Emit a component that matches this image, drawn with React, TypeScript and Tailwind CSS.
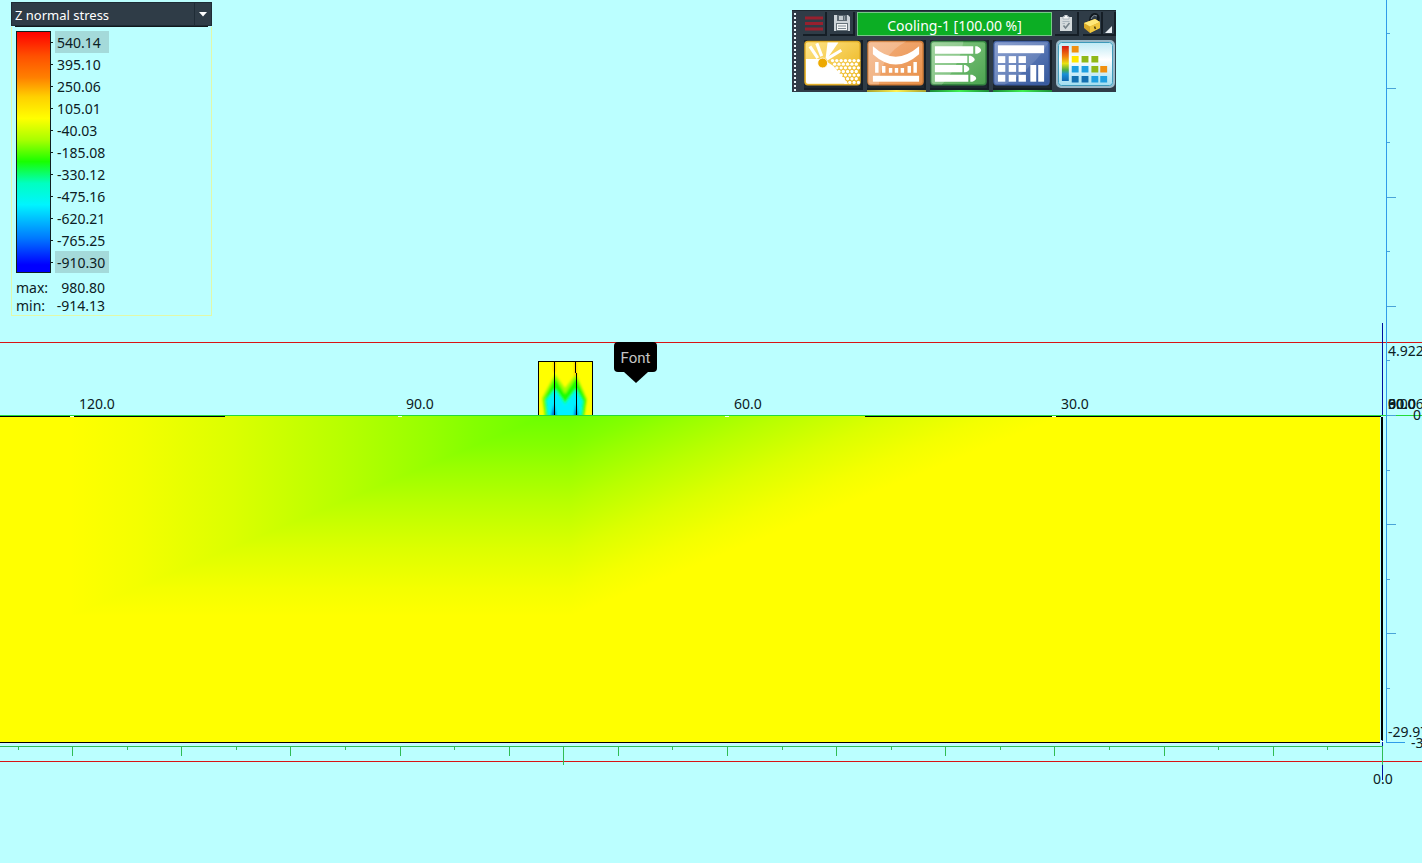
import React from "react";

const LEVELS = [
  "540.14", "395.10", "250.06", "105.01", "-40.03", "-185.08",
  "-330.12", "-475.16", "-620.21", "-765.25", "-910.30",
];

const FIELD_STOPS: [number, string][] = [
  [0, "#6cff00"],
  [0.15, "#84ff00"],
  [0.25, "#98ff00"],
  [0.43, "#b8ff00"],
  [0.66, "#dcff00"],
  [0.86, "#f4ff00"],
  [1, "#ffff00"],
];

function FieldGradient({ id, x1, y1, x2, y2 }: { id: string; x1: number; y1: number; x2: number; y2: number }) {
  return (
    <linearGradient id={id} gradientUnits="userSpaceOnUse" x1={x1} y1={y1} x2={x2} y2={y2}>
      {FIELD_STOPS.map(([offset, color]) => (
        <stop key={offset} offset={offset} stopColor={color} />
      ))}
    </linearGradient>
  );
}

const BOTTOM_TICKS = [18, 72, 127, 181, 236, 290, 345, 400, 454, 509, 563, 618, 672, 727, 782, 836, 891, 945, 1000, 1054, 1109, 1164, 1218, 1273, 1327];
const SIDE_TICKS = [33, 88, 142, 197, 251, 306, 360, 415, 470, 524, 579, 633, 688];

function StressPlot() {
  return (
    <svg
      className="absolute inset-0 h-full w-full"
      viewBox="0 0 1422 863"
      preserveAspectRatio="xMaxYMid slice"
      role="img"
      aria-label="Z normal stress cross-section"
    >
      <defs>
        <FieldGradient id="fieldLeft" x1={545} y1={0} x2={70} y2={0} />
        <FieldGradient id="fieldDown" x1={0} y1={416} x2={0} y2={616} />
        <FieldGradient id="fieldRight" x1={570} y1={416} x2={640} y2={588} />
        <filter id="soft" x="-20%" y="-20%" width="140%" height="140%">
          <feGaussianBlur stdDeviation="1.2" />
        </filter>
        <clipPath id="bead">
          <rect x="538" y="361" width="55" height="54" />
        </clipPath>
      </defs>

      {/* Plate */}
      <g shapeRendering="crispEdges">
        <rect x="0" y="416" width="1380" height="326" fill="#ffff00" />
        <polygon points="70,416 545,416 70,616" fill="url(#fieldLeft)" />
        <polygon points="545,416 570,416 570,616 70,616" fill="url(#fieldDown)" />
        <polygon points="570,416 1062,416 570,616" fill="url(#fieldRight)" />
      </g>

      {/* Weld bead */}
      <g clipPath="url(#bead)">
        <rect x="538" y="361" width="55" height="54" fill="#ffff00" />
        <g filter="url(#soft)">
          <polygon points="555,374 565,388 576,374 587,399 584,420 545,420 542,398" fill="#a0ff00" />
          <polygon points="555,378 565,394 576,378 586,400 583,420 546,420 544,399" fill="#1cff00" />
          <polygon points="555,389 565,403 576,389 583,401 581,420 548,420 546,400" fill="#00ffe0" />
          <polygon points="555,392 565,406 576,392 581,402 579,420 549,420 548,402" fill="#00f0ff" />
          <path d="M554 404L557 420H550Z M576 404L579 420H573Z" fill="#0070d8" />
          <path d="M575.500 361V376M554.500 361V372" stroke="#ff9000" strokeWidth="2" opacity="0.6" />
        </g>
      </g>
      <g fill="none" stroke="#000" shapeRendering="crispEdges">
        <path d="M538.500 416V361.500H592.500V416M554.500 362V415M575.500 362V373M576.500 373V415" />
        <path d="M0 416.500H70M74 416.500H225M865 416.500H1052M1056 416.500H1381M0 742.500H1380" />
        <path d="M1382 417V740" strokeWidth="2" />
      </g>

      {/* Axes and guides */}
      <g shapeRendering="crispEdges">
        <rect x="0" y="342" width="1422" height="1" fill="#d81414" />
        <rect x="0" y="761" width="1422" height="1" fill="#d81414" />
        <rect x="0" y="415" width="1422" height="1" fill="#22dc38" />
        <rect x="0" y="743" width="1380" height="1" fill="#d6eeff" />
        <rect x="0" y="746" width="1383" height="1" fill="#30bc54" />
        <rect x="563" y="746" width="1" height="19" fill="#30bc54" />
        <rect x="1382" y="746" width="1" height="19" fill="#30bc54" />
      </g>
      <g fill="none" shapeRendering="crispEdges">
        <path d={BOTTOM_TICKS.map((x, i) => `M${x + 0.5} 747V${i % 2 ? 756 : 750}`).join("")} stroke="#30bc54" />
        <path d="M1382.500 323V415M1382.500 740V746M1382.500 765V780" stroke="#0010a0" />
        <path d="M1386.500 0V742.500H1405" stroke="#2f9be8" />
        <path d={SIDE_TICKS.map((y, i) => `M1387 ${y + 0.5}H${i % 2 ? 1396 : 1390}`).join("")} stroke="#4aa4d8" />
        <path d="M70 416.500H74M398 416.500H402M725 416.500H729M1052 416.500H1056M1381 741.500H1384" stroke="#fffff0" />
      </g>

      <g className="font-['Noto_Sans',sans-serif] text-[14px]" fill="#0c2024">
        <text x="79" y="409">120.0</text>
        <text x="406" y="409">90.0</text>
        <text x="734" y="409">60.0</text>
        <text x="1061" y="409">30.0</text>
        <text x="1373" y="784">0.0</text>
        <text x="1388" y="356">4.922</text>
        <text x="1388" y="409">30.0</text>
        <text x="1388" y="409">60.0</text>
        <text x="1388" y="409">90.0</text>
        <text x="1388" y="409">0.006</text>
        <text x="1413" y="420">0</text>
        <text x="1388" y="737">-29.97</text>
        <text x="1411" y="748">-30</text>
      </g>
    </svg>
  );
}

function Legend() {
  return (
    <section className="w-[201px] text-[14px] text-[#0c2024]" aria-label="Stress legend">
      <div className="relative">
        <select
          aria-label="Result quantity"
          className="block h-6 w-full appearance-none rounded-none border border-[#1f2c36] bg-[#2f3c47] pt-px pl-[3px] text-[13px] leading-5 text-white"
        >
          <option>Z normal stress</option>
        </select>
        <span className="pointer-events-none absolute inset-y-0 right-0 flex w-[18px] items-center justify-center border border-[#1f2c36]">
          <svg width="8" height="5" viewBox="0 0 8 5" fill="#fff">
            <path d="M0 0H8L4 4.500Z" />
          </svg>
        </span>
      </div>
      <div className="mx-1 h-px bg-[#10181c]" />
      <div className="border border-t-0 border-[#e2f8a8] pl-1 pt-1">
        <div className="flex">
          <div className="w-[35px] border border-[#102020] bg-[linear-gradient(to_bottom,#ff0000_0%,#ff5000_10%,#ff8000_19%,#ffd000_27%,#ffff00_36%,#a8ff00_45%,#18ff00_54%,#00ffc0_63%,#00f4ff_72%,#0078ff_86%,#0000ff_97%)]" />
          <ul>
            {LEVELS.map((level, i) => (
              <li key={level} className="flex h-[22px] items-center">
                <span className="mr-0.5 h-px w-0.5 bg-[#102020]" />
                <span
                  className={
                    i === 0 || i === LEVELS.length - 1
                      ? "h-[22px] w-[54px] bg-[#a4dada] pl-0.5 leading-6"
                      : "h-[22px] w-[54px] pl-0.5 leading-6"
                  }
                >
                  {level}
                </span>
              </li>
            ))}
          </ul>
        </div>
        <dl className="grid w-[89px] grid-cols-[auto_1fr] pt-[6px] leading-[18px]">
          <dt>max:</dt>
          <dd className="text-right">980.80</dd>
          <dt>min:</dt>
          <dd className="text-right">-914.13</dd>
        </dl>
      </div>
    </section>
  );
}

function Tile({ id, from, to, border, children }: { id: string; from: string; to: string; border: string; children: React.ReactNode }) {
  return (
    <svg viewBox="0 0 58 48" className="block h-12 w-full">
      <defs>
        <linearGradient id={id} x1="0" y1="0" x2="1" y2="1">
          <stop offset="0" stopColor={from} />
          <stop offset="1" stopColor={to} />
        </linearGradient>
      </defs>
      <rect x="1" y="1" width="56" height="44" rx="3" fill={`url(#${id})`} stroke={border} strokeWidth="1.5" />
      {children}
    </svg>
  );
}

const DOTS = Array.from({ length: 7 }, (_, r) =>
  Array.from({ length: 7 }, (_, c) => ({ x: 29 + c * 4.4 + (r % 2) * 2.2, y: 20.500 + r * 3.7 })),
).flat().filter((d) => d.x < 56 && d.x > 24 + (d.y - 20) * 0.8);

function WeldIcon() {
  return (
    <Tile id="tileWeld" from="#ffe68c" to="#eab010" border="#e0ac28">
      <path d="M2 19H19L30 26L45 44H4Q2 44 2 42Z" fill="#fff" />
      <path d="M22 18L24 2H35L24 18Z" fill="#fff" />
      <g stroke="#fff" strokeWidth="3.2">
        <path d="M14 18L6 6M18 16L13 3M23 19L38 10" />
      </g>
      <g fill="#fff">
        {DOTS.map((d) => <circle key={`${d.x}-${d.y}`} cx={d.x} cy={d.y} r="1.700" />)}
      </g>
      <circle cx="19" cy="23" r="5" fill="#eda900" stroke="#fff" strokeWidth="0.8" />
    </Tile>
  );
}

function BendIcon() {
  return (
    <Tile id="tileBend" from="#f4b080" to="#e89048" border="#d07c38">
      <path d="M1 3Q1 1 3 1H40Q14 14 12 45H3Q1 45 1 43Z" fill="#fff" opacity="0.22" />
      <path d="M6 6V14Q29 35 53 14V6Q29 27 6 6Z" fill="#fff" />
      <path d="M10 22V33M17 26V33M24 28V33M30 28V33M36 28V33M43 26V33M49 22V33" stroke="#fff" strokeWidth="3.500" />
      <rect x="6" y="36" width="47" height="6" fill="#fff" />
    </Tile>
  );
}

function QueueIcon() {
  return (
    <Tile id="tileQueue" from="#8ccc88" to="#4ca450" border="#348440">
      <path d="M1 3Q1 1 3 1H34Q30 26 12 45H3Q1 45 1 43Z" fill="#fff" opacity="0.2" />
      <g fill="#fff">
        <path d="M5 6H44V13.500H5ZM5 15.500H38V23H5ZM5 25H33V32.500H5ZM5 35H39V42H5Z" />
        <path d="M46 6H48Q52 8 52 10Q52 12 48 13.500H46ZM39.500 15.500H41.500Q45.500 17.500 45.500 19.500Q45.500 21.500 41.500 23H39.500ZM34.500 25H36Q40 27 40 29Q40 31 36 32.500H34.500ZM41 35H43Q47 37 47 38.500Q47 40.500 43 42H41Z" />
      </g>
    </Tile>
  );
}

function TableIcon() {
  return (
    <Tile id="tileTable" from="#7c94cc" to="#34589c" border="#3c5ca0">
      <path d="M1 3Q1 1 3 1H57Q44 26 12 45H3Q1 45 1 43Z" fill="#fff" opacity="0.12" />
      <g fill="#fff">
        <rect x="5" y="5" width="47" height="8" />
        {[16, 25, 35].map((y) => [5, 16, 26].map((x) => <rect key={`${x}-${y}`} x={x} y={y} width="7.5" height="7" />))}
        <rect x="38" y="25" width="6" height="17" />
        <rect x="46" y="25" width="6" height="17" />
      </g>
    </Tile>
  );
}

const CELLS: [number, number, string][] = [
  [16, 5, "#f09010"],
  [16, 15, "#ffe600"], [26, 15, "#90b818"], [36, 15, "#90b818"],
  [16, 25, "#20a0e0"], [26, 25, "#20a0e0"], [36, 25, "#90b818"], [45, 25, "#f09010"],
  [16, 35, "#1470b0"], [26, 35, "#1470b0"], [36, 35, "#20a0e0"], [45, 35, "#20a0e0"],
];

function ResultsIcon() {
  return (
    <svg viewBox="0 0 60 48" className="block h-12 w-full" preserveAspectRatio="none">
      <defs>
        <linearGradient id="tileResults" x1="0" y1="0" x2="0" y2="1">
          <stop offset="0" stopColor="#b8e8f4" />
          <stop offset="0.4" stopColor="#ffffff" />
          <stop offset="1" stopColor="#9cdcf0" />
        </linearGradient>
        <linearGradient id="barResults" x1="0" y1="0" x2="0" y2="1">
          <stop offset="0" stopColor="#d81810" />
          <stop offset="0.3" stopColor="#f08010" />
          <stop offset="0.5" stopColor="#e8e010" />
          <stop offset="0.68" stopColor="#50b040" />
          <stop offset="0.8" stopColor="#1890d8" />
          <stop offset="1" stopColor="#1068b0" />
        </linearGradient>
      </defs>
      <rect x="1" y="1" width="58" height="46" rx="4" fill="url(#tileResults)" stroke="#98b8c8" strokeWidth="2" />
      <rect x="2.500" y="2.500" width="55" height="43" rx="3" fill="none" stroke="#3c98b8" />
      <rect x="6" y="6" width="7" height="35" fill="url(#barResults)" />
      {CELLS.map(([x, y, color]) => (
        <rect key={`${x}-${y}`} x={x} y={y + 1} width="7" height="6.500" fill={color} />
      ))}
    </svg>
  );
}

const TILES = [
  { label: "Weld setup", icon: <WeldIcon />, bar: "h-0.5 bg-[#2f3c47]" },
  { label: "Bending", icon: <BendIcon />, bar: "h-0.5 bg-linear-to-r from-[#a8a030] via-[#fff050] to-[#a8a030]" },
  { label: "Process queue", icon: <QueueIcon />, bar: "h-0.5 bg-linear-to-r from-[#1c8c38] via-[#40f050] to-[#1c8c38]" },
  { label: "Tables", icon: <TableIcon />, bar: "h-0.5 bg-linear-to-r from-[#1c8c38] via-[#40f050] to-[#1c8c38]" },
  { label: "Results", icon: <ResultsIcon />, bar: "h-0.5 bg-[#2f3c47]" },
];

function Toolbar() {
  const small = "flex h-6 items-center justify-center border-b-2 border-r-2 border-[#151e26] bg-[#2f3c47]";
  return (
    <section className="flex h-[82px] w-[324px] border-t border-[#1c2830] bg-[#2f3c47]" aria-label="Simulation toolbar">
      <div className="ml-0.5 mr-[6px] mt-0.5 w-0.5 self-stretch bg-[repeating-linear-gradient(to_bottom,#e8f4f8_0px,#e8f4f8_2px,transparent_2px,transparent_4px)]" />
      <div className="flex-1">
        <div className="flex h-[27px] items-start pt-px pl-px">
          <button type="button" aria-label="Menu" className={`${small} mr-[3px] w-[24px]`}>
            <svg width="18" height="15" viewBox="0 0 18 15" stroke="#98202e" strokeWidth="3">
              <path d="M0 2H18M0 7.500H18M0 13H18" />
            </svg>
          </button>
          <button type="button" aria-label="Save" className={`${small} mr-0.5 w-[25px]`}>
            <svg width="16" height="16" viewBox="0 0 16 16">
              <path d="M0 0H14L16 2V16H0Z" fill="#ccd3d8" />
              <path d="M3 0H13V6H3Z" fill="#5d6972" />
              <path d="M5 1H11V5H5Z" fill="#c4ccd0" />
              <path d="M9 1H10.500V5H9Z" fill="#5d6972" />
              <path d="M2 8H14V16H2Z" fill="#66727a" />
              <path d="M3 9H13V15H3Z" fill="#f4f6f7" />
              <path d="M4 11H12M4 13.500H12" stroke="#7d8992" />
            </svg>
          </button>
          <div
            role="progressbar"
            aria-label="Simulation progress"
            aria-valuenow={100}
            className="flex h-6 w-[195px] items-center justify-center border border-[#78c888] bg-[#0cae24] pt-1 text-[14px] leading-5 text-white"
          >
            Cooling-1 [100.00 %]
          </div>
          <button type="button" aria-label="Report" className={`${small} ml-[3px] mr-1 w-[24px]`}>
            <svg width="12" height="16" viewBox="0 0 12 16">
              <path d="M0 2H12V16H0Z" fill="#d4dadc" />
              <path d="M3 4V1.500H4.500V0H7.500V1.500H9V4Z" fill="#f4f6f6" stroke="#98a4ac" strokeWidth="0.7" />
              <path d="M2.500 6.500H9.500M2.500 8.500H5" stroke="#a8b4bc" />
              <path d="M3.500 10.500L5.500 13L9.500 8" fill="none" stroke="#76828a" strokeWidth="1.600" />
            </svg>
          </button>
          <button type="button" aria-label="Unlock" className={`${small} w-[20px]`}>
            <svg width="18" height="20" viewBox="0 0 18 20" className="shrink-0">
              <path d="M7 8L8 4Q10 0 14 2Q16.500 4 14.500 8" fill="none" stroke="#121a20" strokeWidth="2.600" />
              <path d="M8 6L9.500 3.500Q11 1.500 14 3" fill="none" stroke="#8c9aa4" />
              <path d="M1 10L12 6L17 9V15L7 20L1 15Z" fill="#d8a928" />
              <path d="M1 10L12 6L17 9L7 13.500Z" fill="#ffe878" />
              <path d="M7 13.500L17 9V15L7 20Z" fill="#f0c840" />
              <path d="M11.500 13.500L12.500 16" stroke="#54440c" strokeWidth="1.600" />
            </svg>
          </button>
          <button type="button" aria-label="More lock options" className={`${small} w-[13px]`}>
            <svg width="7" height="7" viewBox="0 0 7 7" className="mt-3">
              <path d="M7 0V7H0Z" fill="#e8eef2" />
            </svg>
          </button>
        </div>
        <div className="flex gap-1 pt-0.5 pr-px pl-0.5">
          {TILES.map((tile) => (
            <div key={tile.label} className="flex-1">
              <button
                type="button"
                aria-label={tile.label}
                className={
                  tile.label === "Results"
                    ? "block w-full pb-0.5"
                    : "block w-full border-r-2 border-b-2 border-[#151e26] bg-[#1d2730]"
                }
              >
                {tile.icon}
              </button>
              <div className={tile.bar} />
            </div>
          ))}
        </div>
      </div>
    </section>
  );
}

export default function App() {
  return (
    <main className="relative min-h-screen w-full overflow-hidden bg-[#bbffff] font-['Noto_Sans',sans-serif]">
      <StressPlot />
      <div className="relative flex items-start justify-between pl-[11px] pr-[306px] pt-0.5">
        <Legend />
        <div className="pt-2">
          <Toolbar />
        </div>
      </div>
      <div role="tooltip" className="absolute left-[614px] top-[342px] flex flex-col items-center">
        <span className="h-[30px] w-[43px] rounded bg-black text-center font-['Roboto',sans-serif] text-[15px] leading-8 text-[#c4c4c4]">
          Font
        </span>
        <svg width="24" height="11" viewBox="0 0 24 11">
          <path d="M0 0H24L12 11Z" />
        </svg>
      </div>
    </main>
  );
}
